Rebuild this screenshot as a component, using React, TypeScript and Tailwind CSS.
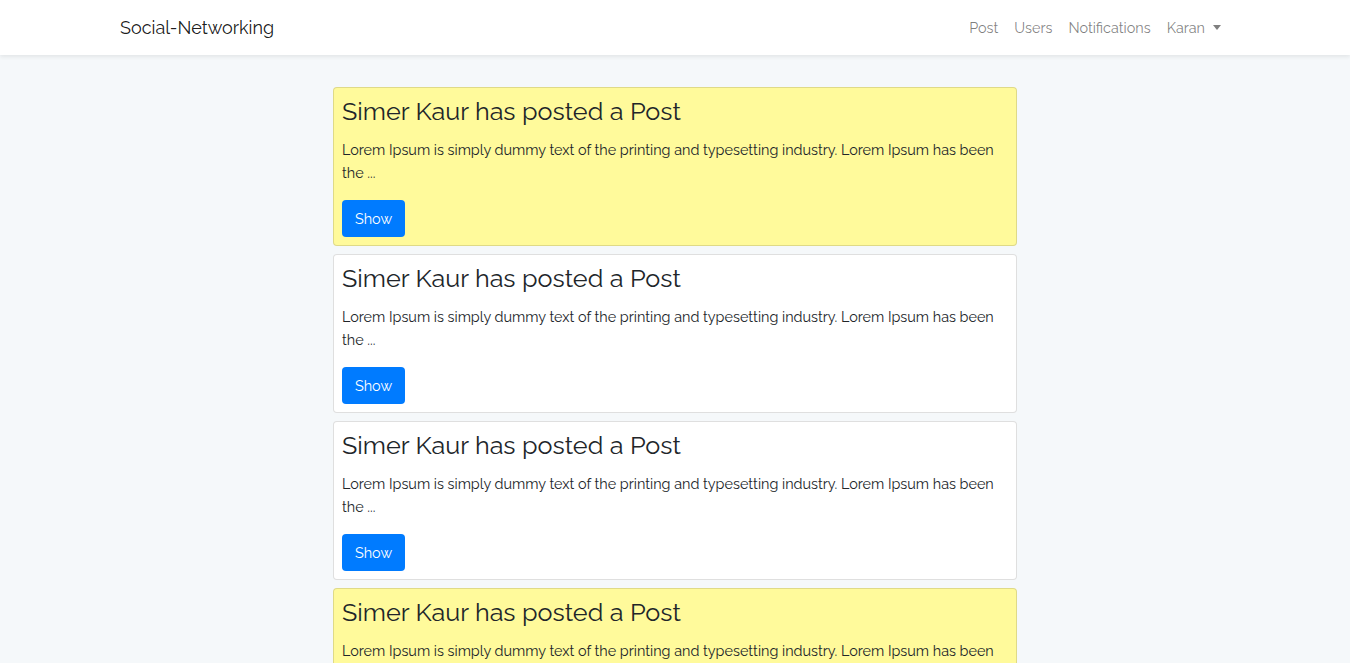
import { useState } from "react";

type Post = { id: number; author: string; body: string; unread: boolean };

const posts: Post[] = [
  {
    id: 1,
    author: "Simer Kaur",
    body: "Lorem Ipsum is simply dummy text of the printing and typesetting industry. Lorem Ipsum has been the ...",
    unread: true,
  },
  {
    id: 2,
    author: "Simer Kaur",
    body: "Lorem Ipsum is simply dummy text of the printing and typesetting industry. Lorem Ipsum has been the ...",
    unread: false,
  },
  {
    id: 3,
    author: "Simer Kaur",
    body: "Lorem Ipsum is simply dummy text of the printing and typesetting industry. Lorem Ipsum has been the ...",
    unread: false,
  },
  {
    id: 4,
    author: "Simer Kaur",
    body: "Lorem Ipsum is simply dummy text of the printing and typesetting industry. Lorem Ipsum has been the ...",
    unread: true,
  },
];

function Navbar() {
  const [open, setOpen] = useState(false);
  return (
    <nav className="relative z-10 h-[55px] bg-white shadow-[0_2px_4px_rgba(0,0,0,0.075)]">
      <div className="mx-auto flex h-full w-[1140px] items-center justify-between px-[15px]">
        <a href="#" className="text-[18px] leading-none text-black/90">
          Social-Networking
        </a>
        <ul className="flex items-center pr-[1px] text-[14.4px] text-black/50">
          <li>
            <a href="#" className="px-2 py-2">Post</a>
          </li>
          <li>
            <a href="#" className="px-2 py-2">Users</a>
          </li>
          <li>
            <a href="#" className="px-2 py-2">Notifications</a>
          </li>
          <li>
            <button
              type="button"
              onClick={() => setOpen((o) => !o)}
              className="flex items-center px-2 py-2"
            >
              Karan
              <span className="ml-[8px] mt-[1px] inline-block h-0 w-0 border-x-[4px] border-t-[5px] border-x-transparent border-t-black/50" />
            </button>
          </li>
        </ul>
      </div>
    </nav>
  );
}

function PostCard({ post }: { post: Post }) {
  return (
    <div
      className={`mb-2 rounded border border-black/[0.125] px-2 pt-2 pb-2 ${
        post.unread ? "bg-[#fffa9b]" : "bg-white"
      }`}
    >
      <h3 className="mb-[12px] text-[25.2px] leading-[30px] text-[#212529]">
        {post.author} has posted a Post
      </h3>
      <p className="mb-4 text-[14.4px] leading-[23px] text-[#212529]">{post.body}</p>
      <button
        type="button"
        className="h-[37px] rounded bg-[#007bff] px-[13px] text-[14.4px] text-white"
      >
        Show
      </button>
    </div>
  );
}

export default function App() {
  return (
    <div className="min-h-[663px] bg-[#f5f8fa] font-['Raleway','Lato',sans-serif]">
      <Navbar />
      <main className="pt-8">
        <div className="mx-auto w-[684px]">
          {posts.map((p) => (
            <PostCard key={p.id} post={p} />
          ))}
        </div>
      </main>
    </div>
  );
}
